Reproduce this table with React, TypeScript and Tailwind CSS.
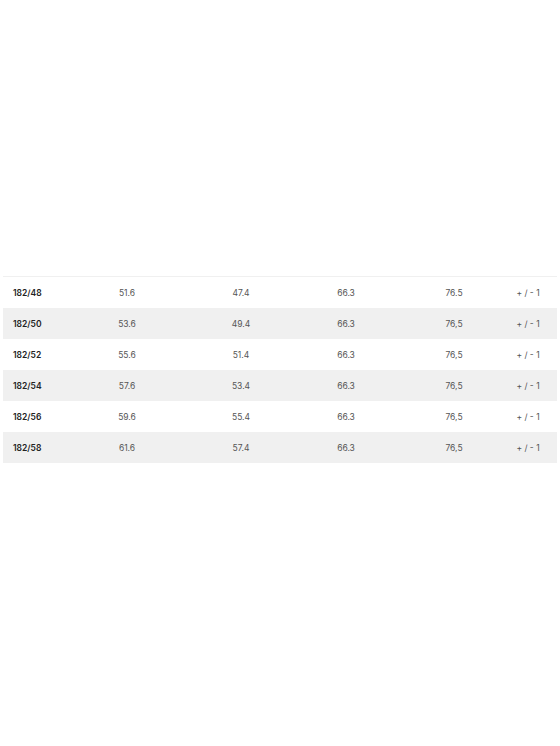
const rows = [
  ["182/48", "51.6", "47.4", "66.3", "76.5", "+ / - 1"],
  ["182/50", "53.6", "49.4", "66.3", "76,5", "+ / - 1"],
  ["182/52", "55.6", "51.4", "66.3", "76,5", "+ / - 1"],
  ["182/54", "57.6", "53.4", "66.3", "76,5", "+ / - 1"],
  ["182/56", "59.6", "55.4", "66.3", "76,5", "+ / - 1"],
  ["182/58", "61.6", "57.4", "66.3", "76,5", "+ / - 1"],
];

export default function App() {
  return (
    <div
      className="w-[560px] h-[746px] bg-white pt-[276px] px-[3px]"
      style={{ fontFamily: "Inter, 'Noto Sans', sans-serif" }}
    >
      <div className="border-t border-[#f0f0f0]">
        {rows.map((row, i) => (
          <div
            key={row[0]}
            className={`grid grid-cols-[67px_114px_114px_96px_120px_28px_1fr] items-center h-[31px] text-[8.5px] ${
              i % 2 === 1 ? "bg-[#f0f0f0]" : "bg-white"
            }`}
          >
            <div className="pl-[10px] pt-px font-semibold text-[#222]">{row[0]}</div>
            {row.slice(1).map((cell, j) => (
              <div key={j} className="pt-px text-center text-[#555] whitespace-nowrap">
                {cell}
              </div>
            ))}
          </div>
        ))}
      </div>
    </div>
  );
}
